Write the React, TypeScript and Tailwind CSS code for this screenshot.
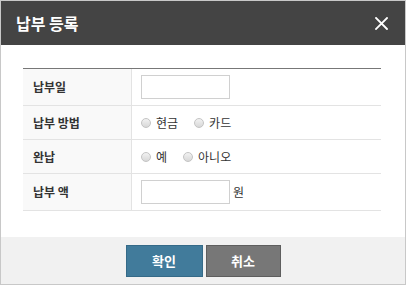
import React from "react";

const font = { fontFamily: '"Noto Sans CJK KR", "Noto Sans", sans-serif' };

function Radio({ label }: { label: string }) {
  return (
    <span className="flex items-center gap-[5px]">
      <span className="w-[10px] h-[10px] rounded-full border border-[#c4c4c4] bg-gradient-to-b from-[#f2f2f2] to-[#d8d8d8]" />
      <span className="text-[12px] text-[#333] leading-none">{label}</span>
    </span>
  );
}

function Row({ label, h, children }: { label: string; h: string; children: React.ReactNode }) {
  return (
    <div className={`flex border-b border-[#e3e3e3] ${h}`}>
      <div className="w-[109px] shrink-0 bg-[#f9f9f9] border-r border-[#e3e3e3] flex items-center pl-[10px] text-[12px] font-bold text-[#333]">
        {label}
      </div>
      <div className="flex-1 flex items-center pl-[9px]">{children}</div>
    </div>
  );
}

export default function App() {
  return (
    <div style={font} className="w-[406px] h-[285px] border border-[#c8c8c8] flex flex-col bg-white">
      <div className="h-[44px] shrink-0 bg-[#444444] flex items-center justify-between pl-[15px] pr-[17px]">
        <span className="text-white text-[16px] font-bold">납부 등록</span>
        <svg width="13" height="13" viewBox="0 0 13 13">
          <path d="M1 1 L12 12 M12 1 L1 12" stroke="#fff" strokeWidth="1.8" strokeLinecap="square" />
        </svg>
      </div>
      <div className="flex-1 pt-[23px] pl-[22px] pr-[24px]">
        <div className="border-t border-[#777]">
          <Row label="납부일" h="h-[37px]">
            <div className="w-[89px] h-[24px] border border-[#d0d0d0] bg-white" />
          </Row>
          <Row label="납부 방법" h="h-[34px]">
            <div className="flex items-center gap-[16px]">
              <Radio label="현금" />
              <Radio label="카드" />
            </div>
          </Row>
          <Row label="완납" h="h-[34px]">
            <div className="flex items-center gap-[16px]">
              <Radio label="예" />
              <Radio label="아니오" />
            </div>
          </Row>
          <Row label="납부 액" h="h-[37px]">
            <div className="flex items-center gap-[3px]">
              <div className="w-[89px] h-[24px] border border-[#d0d0d0] bg-white" />
              <span className="text-[12px] text-[#333]">원</span>
            </div>
          </Row>
        </div>
      </div>
      <div className="h-[47px] shrink-0 bg-[#f1f1f1] flex items-start justify-center gap-[3px] pt-[8px]">
        <button className="w-[77px] h-[32px] bg-[#417b9b] border border-[#356a88] text-white text-[13px] font-bold">
          확인
        </button>
        <button className="w-[75px] h-[32px] bg-[#777777] border border-[#5e5e5e] text-white text-[13px] font-bold">
          취소
        </button>
      </div>
    </div>
  );
}
